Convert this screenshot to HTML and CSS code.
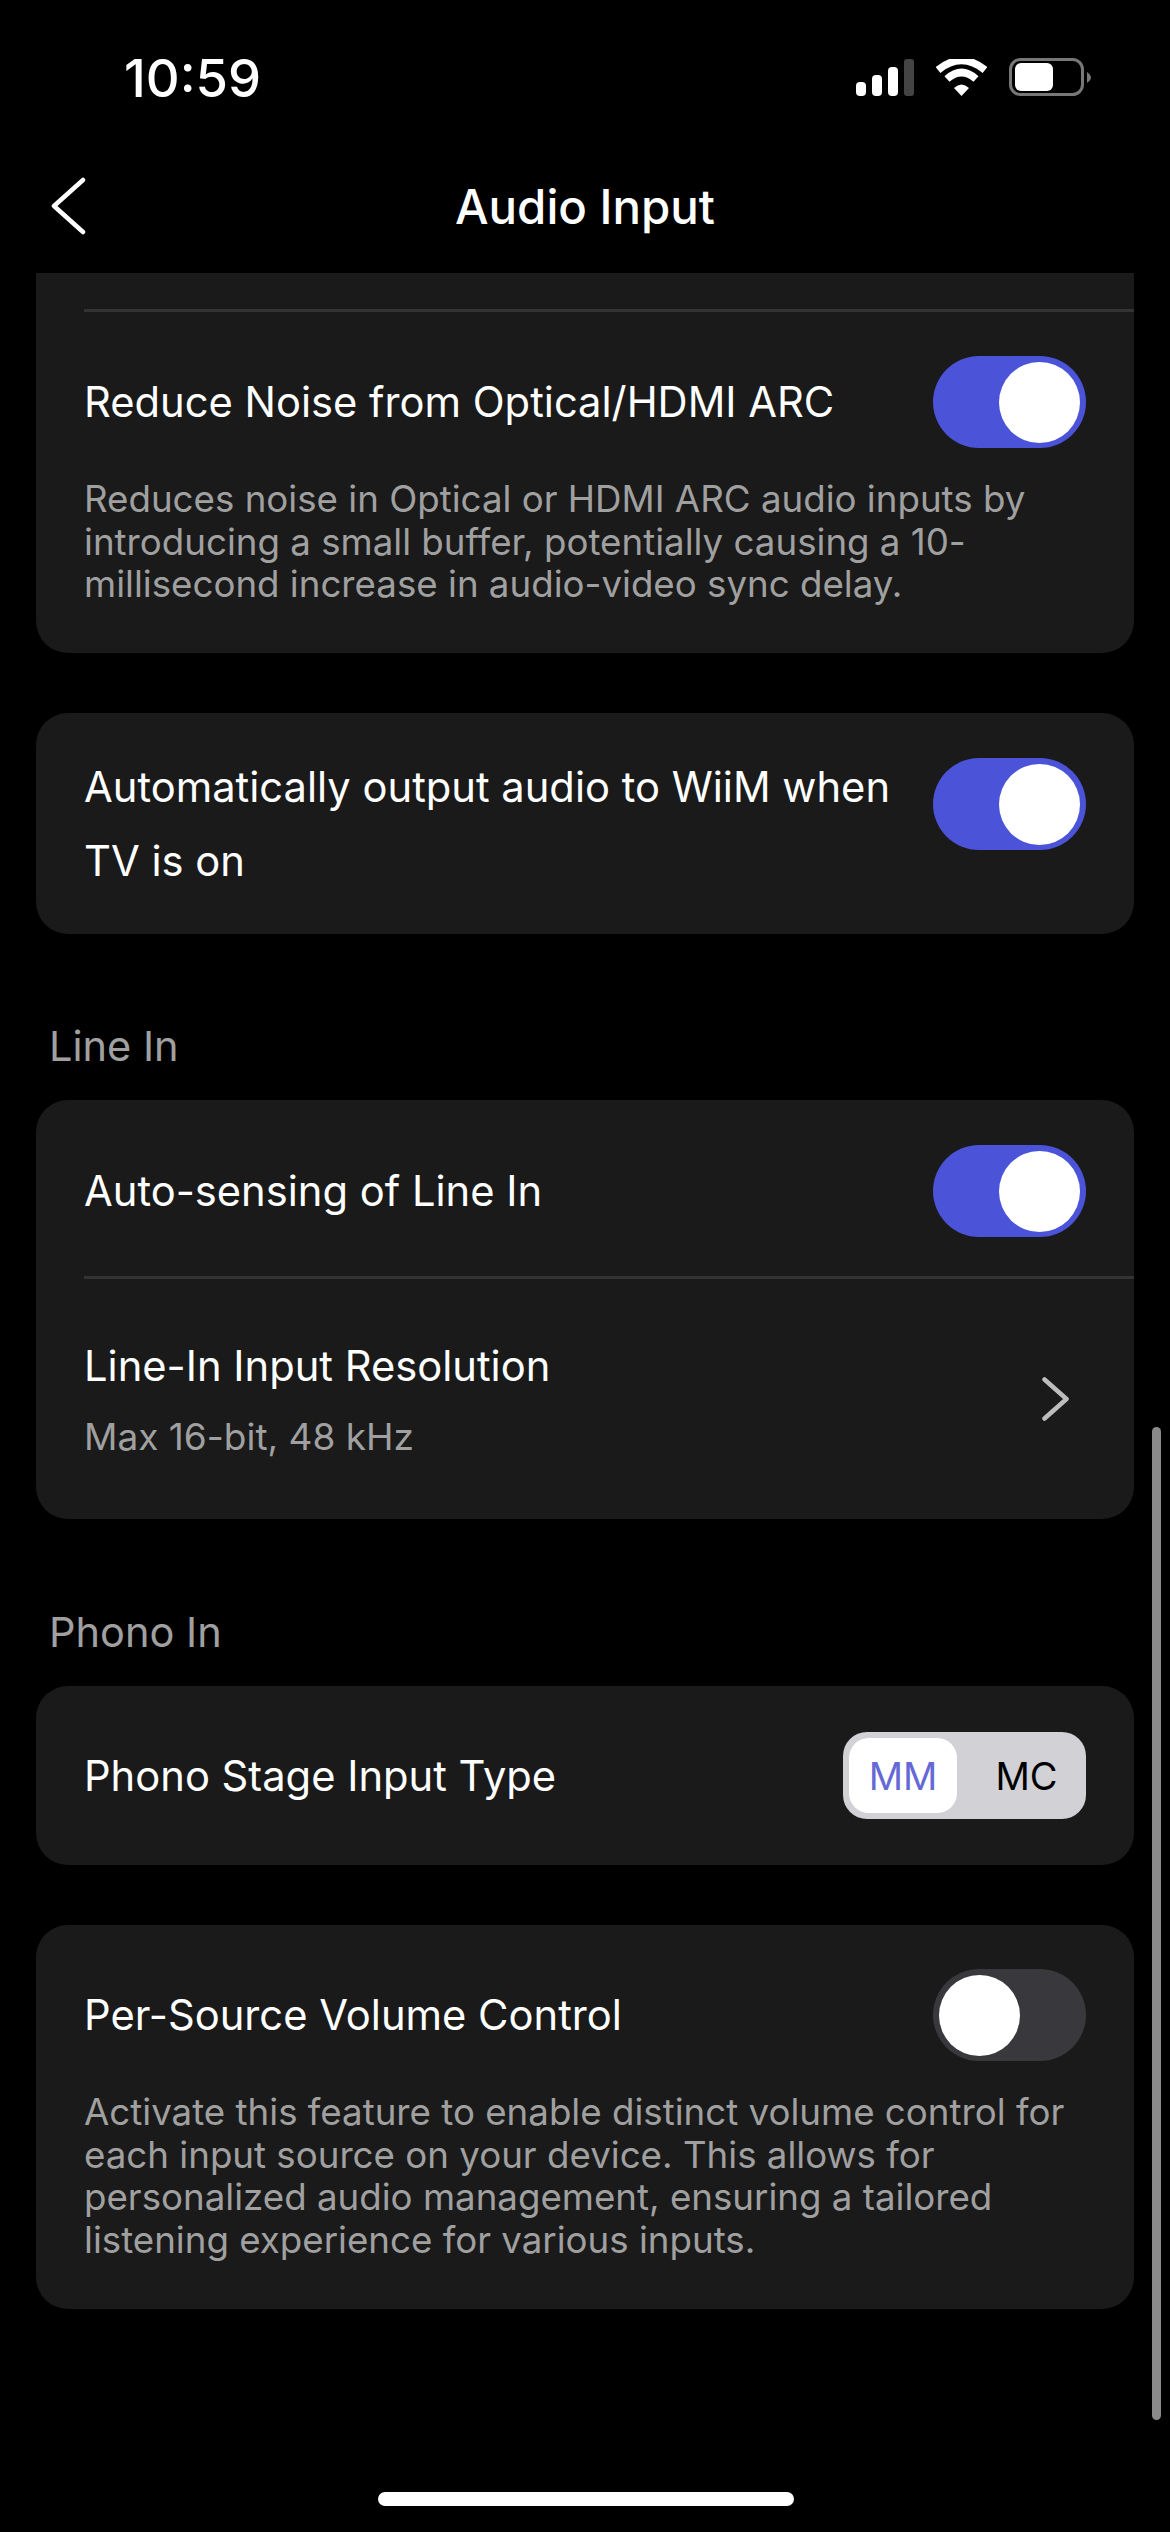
FILE: index.html
```html
<!DOCTYPE html>
<html lang="en">
<head>
<meta charset="UTF-8">
<meta name="viewport" content="width=device-width, initial-scale=1.0">
<title>Audio Input</title>
<link rel="stylesheet" href="styles.css">
</head>
<body>

<div class="screen">

    <!-- Status bar -->
    <div class="status-bar">
        <div class="time">10:59</div>
        <div class="status-icons">
            <svg width="58" height="37" viewBox="0 0 58 37">
                <rect x="0" y="23" width="10" height="14" rx="4" fill="#fff"/>
                <rect x="16" y="16" width="10" height="21" rx="4" fill="#fff"/>
                <rect x="32" y="8" width="10" height="29" rx="4" fill="#fff"/>
                <rect x="48" y="0" width="10" height="37" rx="3" fill="#444"/>
            </svg>
            <svg class="wifi" width="51" height="37" viewBox="0 0 51 37">
                <path d="M2 11 Q25.5 -8 49 11" fill="none" stroke="#fff" stroke-width="7.5"/>
                <path d="M11 20 Q25.5 7 40 20" fill="none" stroke="#fff" stroke-width="7.5"/>
                <path d="M18 29 Q25.5 22 33 29 L25.5 37 Z" fill="#fff"/>
            </svg>
            <svg class="battery" width="82" height="38" viewBox="0 0 82 38">
                <rect x="1.5" y="1.5" width="72" height="35" rx="10" fill="none" stroke="#777" stroke-width="3"/>
                <rect x="6" y="5" width="38" height="28" rx="6" fill="#fff"/>
                <path d="M78 14 Q82 17 82 19.500 Q82 22 78 25 Z" fill="#777"/>
            </svg>
        </div>
    </div>

    <!-- Nav bar -->
    <div class="nav-bar">
        <svg class="back" width="36" height="58" viewBox="0 0 36 58">
            <path d="M33 3 L4 29 L33 55" fill="none" stroke="#fff" stroke-width="4.500" stroke-linecap="round" stroke-linejoin="round"/>
        </svg>
        <div class="nav-title">Audio Input</div>
    </div>

    <div class="content">

        <div class="card card-cut">
            <div class="divider first-divider"></div>
            <div class="row row-desc">
                <div class="row-title">Reduce Noise from Optical/HDMI ARC</div>
                <div class="toggle on"><div class="knob"></div></div>
            </div>
            <div class="desc">Reduces noise in Optical or HDMI ARC audio inputs by introducing a small buffer, potentially causing a 10-millisecond increase in audio-video sync delay.</div>
        </div>

        <div class="card">
            <div class="row row-wrap">
                <div class="row-title tall">Automatically output audio to WiiM when TV is on</div>
                <div class="toggle on"><div class="knob"></div></div>
            </div>
        </div>

        <div class="section-label">Line In</div>
        <div class="card card-line">
            <div class="row row-single">
                <div class="row-title">Auto-sensing of Line In</div>
                <div class="toggle on"><div class="knob"></div></div>
            </div>
            <div class="divider"></div>
            <div class="row row-link">
                <div class="link-text">
                    <div class="row-title">Line-In Input Resolution</div>
                    <div class="row-sub">Max 16-bit, 48 kHz</div>
                </div>
                <svg class="chevron" width="27" height="44" viewBox="0 0 27 44">
                    <path d="M2.500 2.500 L24.500 22 L2.500 41.500" fill="none" stroke="#bdbdbd" stroke-width="4.500" stroke-linecap="round" stroke-linejoin="round"/>
                </svg>
            </div>
        </div>

        <div class="section-label phono">Phono In</div>
        <div class="card card-phono">
            <div class="row">
                <div class="row-title">Phono Stage Input Type</div>
                <div class="segment">
                    <div class="seg-item selected">MM</div>
                    <div class="seg-item other">MC</div>
                </div>
            </div>
        </div>

        <div class="card card-volume">
            <div class="row row-desc">
                <div class="row-title">Per-Source Volume Control</div>
                <div class="toggle"><div class="knob"></div></div>
            </div>
            <div class="desc">Activate this feature to enable distinct volume control for each input source on your device. This allows for personalized audio management, ensuring a tailored listening experience for various inputs.</div>
        </div>

    </div>

    <div class="scrollbar"></div>
    <div class="home-bar"></div>

</div>

</body>
</html>
```

FILE: styles.css
```css
* { box-sizing: border-box; }
html, body { margin: 0; padding: 0; background-color: #000; }
body { font-family: Inter, "Noto Sans", sans-serif; color: #fff; }

.screen { position: relative; width: 1170px; height: 2532px; overflow: hidden; background-color: #000; }

.status-bar { height: 155px; padding: 58px 0 0 124px; display: flex; justify-content: space-between; }
.time { font-size: 52.5px; line-height: 40px; font-weight: 500; }
.status-icons { display: flex; align-items: flex-start; padding: 1px 79px 0 0; margin-left: auto; }
.wifi { margin-left: 22px; }
.battery { margin-left: 22px; margin-top: -1px; }

.nav-bar { height: 118px; display: flex; align-items: center; justify-content: center; position: relative; }
.back { position: absolute; left: 50px; top: 22px; }
.nav-title { font-size: 47.4px; font-weight: 500; line-height: 54px; margin-top: -15px; }

.content { padding: 0 36px; }

.card { background-color: #1a1a1a; border-radius: 32px; margin-bottom: 60px; }
.card-cut { border-radius: 0 0 32px 32px; height: 380px; padding-top: 36px; }
.first-divider { margin-bottom: 44px; }
.divider { height: 3px; background-color: #333; margin-left: 48px; }

.row { display: flex; align-items: center; justify-content: space-between; padding: 0 48px; }
.row-title { font-size: 41.7px; line-height: 74px; font-weight: 400; }
.row-sub { font-size: 37px; line-height: 48px; color: #a0a0a0; margin-top: 10px; }
.tall { width: 815px; }

.row-wrap { height: 221px; align-items: flex-start; padding-top: 37px; }
.row-wrap .toggle { margin-top: 8px; }
.row-single { height: 176px; padding-top: 6px; }
.row-link { height: 240px; }
.link-text { margin-top: -8px; }
.card-line { height: 419px; margin-bottom: 0; }
.card-phono { height: 179px; margin-bottom: 60px; }
.card-phono .row { height: 179px; }
.card-volume { height: 384px; padding-top: 44px; }

.desc { font-size: 36.7px; line-height: 42.5px; color: #a0a0a0; padding: 0 40px 0 48px; margin-top: 30px; }
.row-desc { height: 92px; }

.section-label { font-size: 41.5px; line-height: 50px; color: #a0a0a0; padding-left: 13px; margin: 87px 0 29px; }
.section-label.phono { margin-top: 88px; }

.toggle { width: 153px; height: 92px; border-radius: 46px; background-color: #39393d; padding: 6px; flex-shrink: 0; }
.toggle.on { background-color: #4b53d8; display: flex; justify-content: flex-end; }
.knob { width: 81px; height: 81px; border-radius: 50%; background-color: #fff; }

.segment { width: 243px; height: 87px; border-radius: 24px; background-color: #d1d1d6; padding: 6px; display: flex; color: #000; }
.seg-item { flex: 1; display: flex; align-items: center; justify-content: center; font-size: 38px; }
.seg-item.selected { flex: none; width: 108px; background-color: #fff; border-radius: 20px; color: #6569d6; }
.seg-item.other { padding-left: 16px; }

.chevron { flex-shrink: 0; margin-right: 17px; }

.scrollbar { position: absolute; right: 9px; top: 1427px; width: 9px; height: 993px; border-radius: 5px; background-color: #8a8a8a; }
.home-bar { position: absolute; left: 378px; bottom: 26px; width: 416px; height: 14px; border-radius: 7px; background-color: #fff; }
```
